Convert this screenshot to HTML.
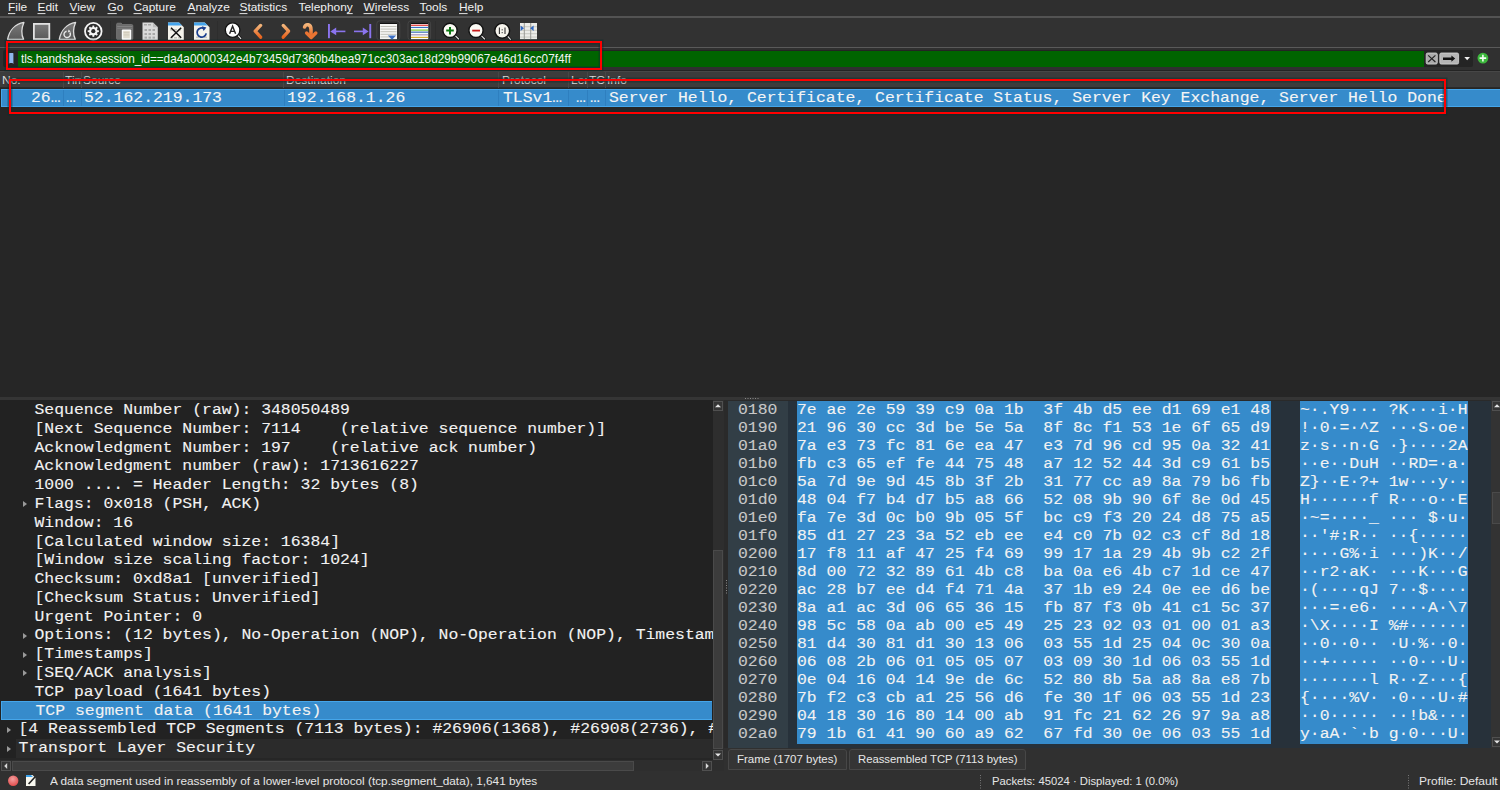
<!DOCTYPE html>
<html><head><meta charset="utf-8">
<style>
html,body{margin:0;padding:0;width:1500px;height:790px;overflow:hidden;background:#2f2f2f;}
body{position:relative;font-family:"Liberation Sans",sans-serif;}
.abs{position:absolute;}
/* menu */
#menubar{position:absolute;left:0;top:0;width:1500px;height:16px;background:#2f2f2f;}
.mi{transform:scaleY(0.92);transform-origin:0 2.5px;position:absolute;top:1px;font-size:11.9px;color:#f0f0f0;line-height:14px;}
.mi u{text-decoration:underline;text-decoration-thickness:1px;text-underline-offset:2px;}
#msep{position:absolute;left:0;top:16px;width:1500px;height:2px;background:#535353;}
#toolbar{position:absolute;left:0;top:18px;width:1500px;height:29px;background:#323232;}
#tsep2{position:absolute;left:0;top:47px;width:1500px;height:1px;background:#5a5a5a;}
#filterbar{position:absolute;left:0;top:48px;width:1500px;height:22px;background:#303030;}
#fframe{position:absolute;left:3px;top:50px;width:1470px;height:17px;background:#242424;border-radius:2px;}
#fgreen{position:absolute;left:18px;top:51px;width:1406px;height:16px;background:#006400;}
#ftext{transform:scaleY(1.04);transform-origin:0 3px;position:absolute;left:21px;top:50.6px;font-size:11.78px;line-height:15px;color:#f4f4f4;white-space:pre;}
/* packet list */
#plhead{position:absolute;left:0;top:71px;width:1500px;height:17px;background:#3c3c3c;box-shadow:inset 0 1px 0 #474747, inset 0 -1px 0 #2a2a2a;}
#plline{position:absolute;left:0;top:70px;width:1500px;height:1px;background:#242424;}
.ph{transform:scaleY(0.9);transform-origin:0 3.4px;position:absolute;top:1.5px;height:15.5px;font-size:12px;line-height:16px;color:#d8d8d8;white-space:nowrap;overflow:hidden;}
.phs{position:absolute;top:0;width:1px;height:17px;background:#474747;}
#plbody{position:absolute;left:0;top:88px;width:1500px;height:309px;background:#262626;}
#selrow{position:absolute;left:1px;top:88.5px;width:1499px;height:18.5px;background:#368bcb;box-shadow:inset 1px 1px 0 #45a6ea, inset 0 -1px 0 #45a6ea;}
.rsep{position:absolute;top:89.5px;width:1px;height:16.5px;background:#2e7fbf;}
.pc{position:absolute;top:90px;transform:scaleY(0.93);transform-origin:0 3px;height:18px;font-family:"Liberation Mono",monospace;font-size:16.43px;-webkit-text-stroke:0.12px currentColor;line-height:18px;color:#f4f4f4;white-space:pre;}
#split1{position:absolute;left:0;top:397px;width:1500px;height:3px;background:#353535;}
/* tree */
#tree{position:absolute;left:0;top:400px;width:713px;height:358px;background:#222222;overflow:hidden;}
.trow{position:absolute;left:0;width:713px;height:19px;}
.trow.sel{background:#368bcb;left:1px;width:711px;box-shadow:inset 1px 1px 0 #45a6ea, inset 0 -1px 0 #45a6ea;}
.trow.hov .hbg{position:absolute;left:16px;top:0;width:697px;height:19px;background:#2b2b2b;}
.tt{position:absolute;top:0.6px;transform:scaleY(0.93);transform-origin:0 3px;font-family:"Liberation Mono",monospace;font-size:16.43px;-webkit-text-stroke:0.12px currentColor;line-height:19px;color:#f2f2f2;white-space:pre;}
.arr{position:absolute;top:7px;width:0;height:0;border-left:4px solid #9a9a9a;border-top:3px solid transparent;border-bottom:3px solid transparent;}
#vscroll{position:absolute;left:713px;top:400px;width:11px;height:361px;background:#2e2e2e;}
#hscroll{position:absolute;left:0;top:760px;width:713px;height:11px;background:#2e2e2e;}
/* hex */
#hexpane{position:absolute;left:724px;top:400px;width:776px;height:348px;background:#2a2a2a;}
#tabarea{position:absolute;left:724px;top:748px;width:776px;height:23px;background:#303030;}
#hexbg{position:absolute;left:728px;top:401px;width:763px;height:347px;background:#27313a;}
.hrow{position:absolute;left:0;width:1500px;height:19px;}
.off{transform:scaleY(0.93);transform-origin:0 3px;position:absolute;left:738px;top:0;font-family:"Liberation Mono",monospace;font-size:16.43px;-webkit-text-stroke:0.12px currentColor;line-height:19px;color:#c8c8c8;white-space:pre;}
.hx{transform:scaleY(0.93);transform-origin:0 3px;position:absolute;left:797px;top:0;font-family:"Liberation Mono",monospace;font-size:16.43px;-webkit-text-stroke:0.12px currentColor;line-height:19px;color:#f2f2f2;white-space:pre;}
.as{transform:scaleY(0.93);transform-origin:0 3px;position:absolute;left:1300px;top:0;font-family:"Liberation Mono",monospace;font-size:16.43px;-webkit-text-stroke:0.12px currentColor;line-height:19px;color:#f2f2f2;white-space:pre;}
#hexsel{position:absolute;left:796.7px;top:401px;width:474.3px;height:342.7px;background:#368bcb;}
#ascsel{position:absolute;left:1299.7px;top:401px;width:168.3px;height:342.7px;background:#368bcb;}
.tab{position:absolute;top:749px;height:21px;border:1px solid #474747;border-radius:3px 3px 0 0;background:#353535;box-sizing:border-box;}
.tabt{position:absolute;left:8px;top:2.5px;font-size:11.3px;line-height:15px;color:#e8e8e8;white-space:nowrap;transform-origin:0 2.5px;}
/* status */
#status{position:absolute;left:0;top:771px;width:1500px;height:19px;background:#303030;}
.st{position:absolute;top:774.6px;font-size:12px;line-height:15px;color:#e6e6e6;white-space:pre;transform-origin:0 2.5px;}
.redbox{position:absolute;border:2px solid #ff0000;box-sizing:border-box;box-shadow:0 0 0 1.5px rgba(10,45,45,0.45), inset 0 0 0 1.5px rgba(10,45,45,0.45);}
</style></head><body>
<div id="menubar">
<span class="mi" style="left:8px"><u>F</u>ile</span>
<span class="mi" style="left:37.5px"><u>E</u>dit</span>
<span class="mi" style="left:69.5px"><u>V</u>iew</span>
<span class="mi" style="left:107.5px"><u>G</u>o</span>
<span class="mi" style="left:133.5px"><u>C</u>apture</span>
<span class="mi" style="left:187.5px"><u>A</u>nalyze</span>
<span class="mi" style="left:239.5px"><u>S</u>tatistics</span>
<span class="mi" style="left:298.5px">Telephon<u>y</u></span>
<span class="mi" style="left:363.5px"><u>W</u>ireless</span>
<span class="mi" style="left:419.5px"><u>T</u>ools</span>
<span class="mi" style="left:459px"><u>H</u>elp</span>
</div>
<div id="msep"></div>
<div id="toolbar">
<svg style="position:absolute;left:0;top:-18px" width="560" height="48" viewBox="0 0 560 48">
<defs>
<linearGradient id="gfin" x1="0" y1="0" x2="0" y2="1"><stop offset="0" stop-color="#7a7a7a"/><stop offset="1" stop-color="#5a5a5a"/></linearGradient>
<linearGradient id="gor" x1="0" y1="0" x2="0" y2="1"><stop offset="0" stop-color="#f2b47a"/><stop offset="1" stop-color="#e8641e"/></linearGradient>
</defs>
<!-- separators -->
<rect x="110" y="21" width="1" height="20" fill="#2d2d2d"/>
<rect x="217" y="21" width="1" height="20" fill="#2d2d2d"/>
<rect x="435" y="21" width="1" height="20" fill="#2d2d2d"/>
<!-- 1 shark fin -->
<path d="M7.6,39.4 C9.2,30.5 15.2,24 23.9,22.4 C21.2,28.5 21,34 23.6,39.4 Z" fill="url(#gfin)" stroke="#dedede" stroke-width="1.3" stroke-linejoin="round"/>
<!-- 2 stop -->
<rect x="33.9" y="23.9" width="15.4" height="15.2" fill="url(#gfin)" stroke="#e2e2e2" stroke-width="1.8"/>
<!-- 3 restart fin -->
<path d="M59.3,39.4 C60.9,30.5 66.9,24 75.6,22.4 C72.9,28.5 72.7,34 75.3,39.4 Z" fill="url(#gfin)" stroke="#dedede" stroke-width="1.3" stroke-linejoin="round"/>
<path d="M66.6,31.2 A3.2,3.2 0 1 0 69.8,32.5" fill="none" stroke="#e8e8e8" stroke-width="1.4"/>
<path d="M68.6,29.6 L70.6,31.6 L67.8,32.6 Z" fill="#e8e8e8"/>
<!-- 4 gear -->
<circle cx="93.3" cy="31.2" r="8.3" fill="#2b2b2b" stroke="#f4f4f4" stroke-width="1.8"/>
<g transform="translate(93.3,31.2)" fill="#f4f4f4">
<circle r="4.3"/>
<rect x="-0.9" y="-5.6" width="1.8" height="11.2"/>
<rect x="-0.9" y="-5.6" width="1.8" height="11.2" transform="rotate(45)"/>
<rect x="-0.9" y="-5.6" width="1.8" height="11.2" transform="rotate(90)"/>
<rect x="-0.9" y="-5.6" width="1.8" height="11.2" transform="rotate(135)"/>
<circle r="2.1" fill="#2b2b2b"/>
</g>
<!-- 5 folder -->
<path d="M116.6,38.4 V24.4 Q116.6,23.2 117.8,23.2 H121.2 L122.6,24.6 H131.6 Q132.8,24.6 132.8,25.8 V38.4 Q132.8,39.6 131.6,39.6 H117.8 Q116.6,39.6 116.6,38.4 Z" fill="#6a6a6a" stroke="#7c7c7c" stroke-width="0.8"/>
<rect x="117.2" y="26.2" width="15" height="0.9" fill="#888"/>
<rect x="117.2" y="28" width="15" height="0.8" fill="#7e7e7e"/>
<rect x="121.8" y="29.4" width="9.4" height="10.5" rx="1" fill="#fbfbfb"/>
<rect x="123.2" y="30.9" width="6.6" height="7.4" fill="#e0dccf"/>
<rect x="123.6" y="32.4" width="5.8" height="0.7" fill="#c8c2b2"/>
<rect x="123.6" y="34.6" width="5.8" height="0.7" fill="#c8c2b2"/>
<!-- 6 file -->
<path d="M142.5,22.5 h10.5 l4.8,4.8 v12.8 h-15.3 Z" fill="#dadada"/>
<path d="M153,22.5 v4.8 h4.8" fill="#bdbdbd"/>
<g fill="#a8a8a8"><rect x="144.5" y="29" width="2.5" height="2"/><rect x="148.5" y="29" width="2.5" height="2"/><rect x="152.5" y="29" width="2.5" height="2"/>
<rect x="144.5" y="33" width="2.5" height="2"/><rect x="148.5" y="33" width="2.5" height="2"/><rect x="152.5" y="33" width="2.5" height="2"/>
<rect x="144.5" y="36.6" width="2.5" height="2"/><rect x="148.5" y="36.6" width="2.5" height="2"/><rect x="152.5" y="36.6" width="2.5" height="2"/>
<rect x="144" y="24" width="3" height="1.5"/><rect x="148" y="24" width="3" height="1.5"/></g>
<!-- 7 close file -->
<path d="M168,22.5 h11 l4.8,4.8 v12.8 h-15.8 Z" fill="#f4f3ec"/>
<path d="M168,22.5 h11 l3,3 h-14 Z" fill="#44a4ec"/>
<g fill="#c9c9c0"><rect x="170" y="29" width="3" height="1.6"/><rect x="174" y="29" width="3" height="1.6"/><rect x="178" y="29" width="3" height="1.6"/><rect x="170" y="37" width="3" height="1.6"/><rect x="174" y="37" width="3" height="1.6"/><rect x="178" y="37" width="3" height="1.6"/></g>
<path d="M171,27.8 L181.2,37.8 M181.2,27.8 L171,37.8" stroke="#111" stroke-width="1.5"/>
<!-- 8 reload file -->
<path d="M194,22.5 h10.7 l4.8,4.8 v12.8 h-15.5 Z" fill="#f4f3ec"/>
<path d="M194,22.5 h10.7 l3,3 h-13.7 Z" fill="#44a4ec"/>
<g fill="#c9c9c0"><rect x="196" y="36.5" width="3" height="1.6"/><rect x="200" y="36.5" width="3" height="1.6"/><rect x="204" y="36.5" width="3" height="1.6"/></g>
<path d="M204.2,28.6 A4.6,4.6 0 1 0 206.2,33.4" fill="none" stroke="#1a3f8f" stroke-width="1.8"/>
<path d="M201.8,26.2 L206.4,27.6 L203.6,31 Z" fill="#1a3f8f"/>
<!-- 9 find -->
<path d="M237.6,35 L240.8,38.6" stroke="#111" stroke-width="2.6" stroke-linecap="round"/>
<path d="M237.6,35 L240.8,38.6" stroke="#e6e6e6" stroke-width="1.2" stroke-linecap="round"/>
<circle cx="232.6" cy="30.1" r="7.3" fill="#fcfcfc" stroke="#111" stroke-width="1.3"/>
<path d="M229.6,33.8 L232.6,26.2 L235.6,33.8 M230.6,31.4 H234.6" fill="none" stroke="#222" stroke-width="1.4"/>
<!-- 10 prev / 11 next -->
<polyline points="260.6,25.4 255.2,31.2 260.6,37.2" fill="none" stroke="url(#gor)" stroke-width="3.3" stroke-linecap="round" stroke-linejoin="round"/>
<polyline points="283.2,25.4 288.6,31.2 283.2,37.2" fill="none" stroke="url(#gor)" stroke-width="3.3" stroke-linecap="round" stroke-linejoin="round"/>
<!-- 12 go to -->
<path d="M304.6,27 C305.8,23.6 311,23.8 311,29.5 L311,36" fill="none" stroke="url(#gor)" stroke-width="3.6" stroke-linecap="round"/>
<polyline points="306.6,33 311.2,37.6 315.8,33" fill="none" stroke="#ea7432" stroke-width="3.4" stroke-linecap="round" stroke-linejoin="round"/>
<!-- 13 first / 14 last -->
<g fill="#8a74ee" stroke="none">
<rect x="328" y="24" width="1.9" height="14.2"/>
<rect x="334" y="30.6" width="11.4" height="1.6"/>
<path d="M330.3,31.4 L336.2,27.6 L336.2,35.2 Z"/>
<rect x="369.3" y="24" width="1.9" height="14.2"/>
<rect x="354" y="30.6" width="11.4" height="1.6"/>
<path d="M368.6,31.4 L362.8,27.6 L362.8,35.2 Z"/>
</g>
<!-- 15 autoscroll -->
<rect x="376.8" y="20.8" width="23" height="19.4" rx="3" fill="#303030" stroke="#454545" stroke-width="1"/>
<rect x="380" y="23" width="17" height="16.2" fill="#f6f6f4"/>
<rect x="380" y="23" width="17" height="1" fill="#111"/>
<g fill="#c0c0b8"><rect x="380.5" y="26" width="16" height="1"/><rect x="380.5" y="28.6" width="16" height="1"/><rect x="380.5" y="31.2" width="16" height="1"/><rect x="380.5" y="33.8" width="16" height="1"/><rect x="380.5" y="36.4" width="9" height="1"/></g>
<path d="M387.8,35.4 L396.2,35.4 L392,39.8 Z" fill="#3b6fc4"/>
<!-- 16 colorize -->
<rect x="408" y="20.8" width="22.6" height="19.4" rx="3" fill="#303030" stroke="#454545" stroke-width="1"/>
<rect x="411" y="23" width="17.2" height="16.2" fill="#fbfbfb"/>
<rect x="411" y="23" width="17.2" height="1" fill="#111"/>
<rect x="411" y="24.7" width="17.2" height="1.1" fill="#e02424"/>
<rect x="411" y="26.9" width="17.2" height="1.1" fill="#3b6fc4"/>
<rect x="411" y="29.5" width="17.2" height="1.2" fill="#7ccd2e"/>
<rect x="411" y="31.6" width="17.2" height="1.1" fill="#2a64b0"/>
<rect x="411" y="34.2" width="17.2" height="1.2" fill="#a797c0"/>
<rect x="411" y="36.8" width="17.2" height="1.2" fill="#d8b030"/>
<!-- 17 zoom in -->
<path d="M455,35.4 L458.6,39" stroke="#111" stroke-width="2.6" stroke-linecap="round"/>
<path d="M455,35.4 L458.6,39" stroke="#dedede" stroke-width="1.2" stroke-linecap="round"/>
<circle cx="450" cy="30.4" r="7.1" fill="#fbfaf4" stroke="#111" stroke-width="1.4"/>
<path d="M446.2,30.6 H453.8 M450,26.9 V34.4" stroke="#0b7a12" stroke-width="2"/>
<!-- 18 zoom out -->
<path d="M481,35.4 L484.6,39" stroke="#111" stroke-width="2.6" stroke-linecap="round"/>
<path d="M481,35.4 L484.6,39" stroke="#dedede" stroke-width="1.2" stroke-linecap="round"/>
<circle cx="476" cy="30.4" r="7.1" fill="#fbfaf4" stroke="#111" stroke-width="1.4"/>
<path d="M472.2,30.6 H480" stroke="#c81a1a" stroke-width="1.8"/>
<!-- 19 normal size -->
<path d="M507.4,36 L510.6,39.6" stroke="#111" stroke-width="2.6" stroke-linecap="round"/>
<path d="M507.4,36 L510.6,39.6" stroke="#dedede" stroke-width="1.2" stroke-linecap="round"/>
<circle cx="502.2" cy="30.8" r="7.4" fill="#f6f4ec" stroke="#111" stroke-width="1.4"/>
<path d="M499.4,27.6 V34 M505,27.6 V34" stroke="#333" stroke-width="1.1"/>
<rect x="501.6" y="29.2" width="1.2" height="1.2" fill="#555"/><rect x="501.6" y="32" width="1.2" height="1.2" fill="#555"/>
<!-- 20 resize columns -->
<rect x="520" y="23" width="17" height="16.2" fill="#ecece8"/>
<g fill="#c4c4bc"><rect x="520" y="26.3" width="17" height="0.9"/><rect x="520" y="29.8" width="17" height="0.9"/><rect x="520" y="33.3" width="17" height="0.9"/><rect x="520" y="36.6" width="17" height="0.9"/></g>
<rect x="523.8" y="23" width="1" height="16.2" fill="#9a9a94"/>
<rect x="530.2" y="23" width="1" height="16.2" fill="#9a9a94"/>
<path d="M520.6,25.6 L524,28.3 L520.6,31 Z" fill="#2e66c0"/>
<path d="M533.6,25.6 L530.2,28.3 L533.6,31 Z" fill="#2e66c0"/>
</svg>

</div>
<div id="tsep2"></div>
<div id="filterbar"></div>
<div id="fframe"></div>
<div class="abs" style="left:9px;top:53px;width:4px;height:10px;background:#8fb4e8;"></div>
<div id="fgreen"></div>
<div id="ftext"><span style="letter-spacing:-0.1px">tls.handshake.session_id==</span><span style="letter-spacing:0.03px">da4a0000342e4b73459d7360b4bea971cc303ac18d29b99067e46d16cc07f4ff</span></div>
<svg style="position:absolute;left:0;top:0" width="1500" height="72" viewBox="0 0 1500 72">
<path d="M8.8,53.2 H13.4 V64 L11.1,61.8 L8.8,64 Z" fill="#8fb6ec"/>
<rect x="1426.2" y="53" width="11.1" height="11.1" rx="1.5" fill="#ababab" stroke="#d4d4d4" stroke-width="0.8"/>
<path d="M1428.2,55.4 L1435.4,62 M1435.4,55.4 L1428.2,62" stroke="#222" stroke-width="1.1"/>
<rect x="1439.8" y="53" width="18.8" height="11.1" rx="1.5" fill="#b4b4b4" stroke="#d8d8d8" stroke-width="0.8"/>
<path d="M1443,57.4 H1451.4 V55.6 L1455.2,58.6 L1451.4,61.8 V60 H1443 Z" fill="#111"/>
<path d="M1464.3,57 L1470,57 L1467.15,60.2 Z" fill="#f0f0f0"/>
<circle cx="1482.9" cy="58.1" r="5.4" fill="#3db83d"/>
<path d="M1479.6,58.1 H1486.2 M1482.9,54.8 V61.4" stroke="#f4fff4" stroke-width="1.6"/>
</svg>

<div id="plline"></div>
<div id="plhead">
<span class="ph" style="left:2px;width:60px">No.</span><div class="phs" style="left:63px"></div>
<span class="ph" style="left:65px;width:16px">Time</span><div class="phs" style="left:81px"></div>
<span class="ph" style="left:83px;width:200px">Source</span><div class="phs" style="left:283px"></div>
<span class="ph" style="left:286px;width:210px">Destination</span><div class="phs" style="left:498px"></div>
<span class="ph" style="left:502px;width:66px">Protocol</span><div class="phs" style="left:568px"></div>
<span class="ph" style="left:571px;width:16px">Length</span><div class="phs" style="left:587px"></div>
<span class="ph" style="left:589px;width:16px">TCP</span><div class="phs" style="left:605px"></div>
<span class="ph" style="left:607px;width:200px">Info</span>
</div>
<div id="plbody"></div>
<div id="selrow"></div><div class="rsep" style="left:63px"></div><div class="rsep" style="left:81px"></div><div class="rsep" style="left:284px"></div><div class="rsep" style="left:498px"></div><div class="rsep" style="left:568px"></div><div class="rsep" style="left:587px"></div><div class="rsep" style="left:605px"></div>
<span class="pc" style="left:31px">26…</span>
<span class="pc" style="left:66px">…</span>
<span class="pc" style="left:84px">52.162.219.173</span>
<span class="pc" style="left:287px">192.168.1.26</span>
<span class="pc" style="left:503px">TLSv1…</span>
<span class="pc" style="left:576px">…</span>
<span class="pc" style="left:590px">…</span>
<span class="pc" style="left:609px">Server Hello, Certificate, Certificate Status, Server Key Exchange, Server Hello Done</span>
<div id="split1"></div>
<div id="tree">
<div class="trow" style="top:0.50px"><span class="tt" style="left:34.5px">Sequence Number (raw): 348050489</span></div>
<div class="trow" style="top:19.28px"><span class="tt" style="left:34.5px">[Next Sequence Number: 7114    (relative sequence number)]</span></div>
<div class="trow" style="top:38.06px"><span class="tt" style="left:34.5px">Acknowledgment Number: 197    (relative ack number)</span></div>
<div class="trow" style="top:56.84px"><span class="tt" style="left:34.5px">Acknowledgment number (raw): 1713616227</span></div>
<div class="trow" style="top:75.62px"><span class="tt" style="left:34.5px">1000 .... = Header Length: 32 bytes (8)</span></div>
<div class="trow" style="top:94.40px"><span class="arr" style="left:23px"></span><span class="tt" style="left:34.5px">Flags: 0x018 (PSH, ACK)</span></div>
<div class="trow" style="top:113.18px"><span class="tt" style="left:34.5px">Window: 16</span></div>
<div class="trow" style="top:131.96px"><span class="tt" style="left:34.5px">[Calculated window size: 16384]</span></div>
<div class="trow" style="top:150.74px"><span class="tt" style="left:34.5px">[Window size scaling factor: 1024]</span></div>
<div class="trow" style="top:169.52px"><span class="tt" style="left:34.5px">Checksum: 0xd8a1 [unverified]</span></div>
<div class="trow" style="top:188.30px"><span class="tt" style="left:34.5px">[Checksum Status: Unverified]</span></div>
<div class="trow" style="top:207.08px"><span class="tt" style="left:34.5px">Urgent Pointer: 0</span></div>
<div class="trow" style="top:225.86px"><span class="arr" style="left:23px"></span><span class="tt" style="left:34.5px">Options: (12 bytes), No-Operation (NOP), No-Operation (NOP), Timestamps</span></div>
<div class="trow" style="top:244.64px"><span class="arr" style="left:23px"></span><span class="tt" style="left:34.5px">[Timestamps]</span></div>
<div class="trow" style="top:263.42px"><span class="arr" style="left:23px"></span><span class="tt" style="left:34.5px">[SEQ/ACK analysis]</span></div>
<div class="trow" style="top:282.20px"><span class="tt" style="left:34.5px">TCP payload (1641 bytes)</span></div>
<div class="trow sel" style="top:300.98px"><span class="tt" style="left:34.5px">TCP segment data (1641 bytes)</span></div>
<div class="trow" style="top:319.76px"><span class="arr" style="left:7px"></span><span class="tt" style="left:18.5px">[4 Reassembled TCP Segments (7113 bytes): #26906(1368), #26908(2736), #26910(4104)]</span></div>
<div class="trow hov" style="top:338.54px"><div class="hbg"></div><span class="arr" style="left:7px"></span><span class="tt" style="left:18.5px">Transport Layer Security</span></div>
</div>
<div id="vscroll"></div>
<div class="abs" style="left:713px;top:401px;width:10px;height:10px;border:1px solid #505050;box-sizing:border-box;background:#353535;"></div>
<svg class="abs" style="left:713px;top:401px" width="10" height="10"><path d="M2,6.2 L5,3.2 L8,6.2 Z" fill="#e6e6e6"/></svg>
<div class="abs" style="left:713px;top:550px;width:10px;height:199px;border:1px solid #4a4a4a;box-sizing:border-box;background:#3c3c3c;"></div>
<div class="abs" style="left:713px;top:750px;width:10px;height:10px;border:1px solid #505050;box-sizing:border-box;background:#353535;"></div>
<svg class="abs" style="left:713px;top:750px" width="10" height="10"><path d="M2,3.6 L8,3.6 L5,6.6 Z" fill="#e6e6e6"/></svg>
<div class="abs" style="left:0;top:758px;width:713px;height:3px;background:#262626;"></div>
<div id="hscroll"></div>
<div class="abs" style="left:1px;top:761px;width:10px;height:10px;border:1px solid #505050;box-sizing:border-box;background:#353535;"></div>
<svg class="abs" style="left:1px;top:761px" width="10" height="10"><path d="M6.2,2 L3.2,5 L6.2,8 Z" fill="#d8d8d8"/></svg>
<div class="abs" style="left:12px;top:761px;width:622px;height:10px;border:1px solid #4a4a4a;box-sizing:border-box;background:#3c3c3c;"></div>
<div class="abs" style="left:702px;top:761px;width:10px;height:10px;border:1px solid #505050;box-sizing:border-box;background:#353535;"></div>
<svg class="abs" style="left:702px;top:761px" width="10" height="10"><path d="M3.8,2 L6.8,5 L3.8,8 Z" fill="#d8d8d8"/></svg>
<div class="abs" style="left:713px;top:760px;width:11px;height:11px;background:#2e2e2e;"></div>
<div id="hexpane"></div><div id="tabarea"></div>
<div id="hexbg"></div>
<div class="abs" style="left:728px;top:401px;width:60px;height:347px;background:#323e46;"></div>
<div id="hexsel"></div>
<div id="ascsel"></div>
<div class="hrow" style="top:400.50px"><span class="off">0180</span><span class="hx">7e ae 2e 59 39 c9 0a 1b  3f 4b d5 ee d1 69 e1 48</span><span class="as">~·.Y9··· ?K···i·H</span></div>
<div class="hrow" style="top:418.55px"><span class="off">0190</span><span class="hx">21 96 30 cc 3d be 5e 5a  8f 8c f1 53 1e 6f 65 d9</span><span class="as">!·0·=·^Z ···S·oe·</span></div>
<div class="hrow" style="top:436.60px"><span class="off">01a0</span><span class="hx">7a e3 73 fc 81 6e ea 47  e3 7d 96 cd 95 0a 32 41</span><span class="as">z·s··n·G ·}····2A</span></div>
<div class="hrow" style="top:454.65px"><span class="off">01b0</span><span class="hx">fb c3 65 ef fe 44 75 48  a7 12 52 44 3d c9 61 b5</span><span class="as">··e··DuH ··RD=·a·</span></div>
<div class="hrow" style="top:472.70px"><span class="off">01c0</span><span class="hx">5a 7d 9e 9d 45 8b 3f 2b  31 77 cc a9 8a 79 b6 fb</span><span class="as">Z}··E·?+ 1w···y··</span></div>
<div class="hrow" style="top:490.75px"><span class="off">01d0</span><span class="hx">48 04 f7 b4 d7 b5 a8 66  52 08 9b 90 6f 8e 0d 45</span><span class="as">H······f R···o··E</span></div>
<div class="hrow" style="top:508.80px"><span class="off">01e0</span><span class="hx">fa 7e 3d 0c b0 9b 05 5f  bc c9 f3 20 24 d8 75 a5</span><span class="as">·~=····_ ··· $·u·</span></div>
<div class="hrow" style="top:526.85px"><span class="off">01f0</span><span class="hx">85 d1 27 23 3a 52 eb ee  e4 c0 7b 02 c3 cf 8d 18</span><span class="as">··'#:R·· ··{·····</span></div>
<div class="hrow" style="top:544.90px"><span class="off">0200</span><span class="hx">17 f8 11 af 47 25 f4 69  99 17 1a 29 4b 9b c2 2f</span><span class="as">····G%·i ···)K··/</span></div>
<div class="hrow" style="top:562.95px"><span class="off">0210</span><span class="hx">8d 00 72 32 89 61 4b c8  ba 0a e6 4b c7 1d ce 47</span><span class="as">··r2·aK· ···K···G</span></div>
<div class="hrow" style="top:581.00px"><span class="off">0220</span><span class="hx">ac 28 b7 ee d4 f4 71 4a  37 1b e9 24 0e ee d6 be</span><span class="as">·(····qJ 7··$····</span></div>
<div class="hrow" style="top:599.05px"><span class="off">0230</span><span class="hx">8a a1 ac 3d 06 65 36 15  fb 87 f3 0b 41 c1 5c 37</span><span class="as">···=·e6· ····A·\7</span></div>
<div class="hrow" style="top:617.10px"><span class="off">0240</span><span class="hx">98 5c 58 0a ab 00 e5 49  25 23 02 03 01 00 01 a3</span><span class="as">·\X····I %#······</span></div>
<div class="hrow" style="top:635.15px"><span class="off">0250</span><span class="hx">81 d4 30 81 d1 30 13 06  03 55 1d 25 04 0c 30 0a</span><span class="as">··0··0·· ·U·%··0·</span></div>
<div class="hrow" style="top:653.20px"><span class="off">0260</span><span class="hx">06 08 2b 06 01 05 05 07  03 09 30 1d 06 03 55 1d</span><span class="as">··+····· ··0···U·</span></div>
<div class="hrow" style="top:671.25px"><span class="off">0270</span><span class="hx">0e 04 16 04 14 9e de 6c  52 80 8b 5a a8 8a e8 7b</span><span class="as">·······l R··Z···{</span></div>
<div class="hrow" style="top:689.30px"><span class="off">0280</span><span class="hx">7b f2 c3 cb a1 25 56 d6  fe 30 1f 06 03 55 1d 23</span><span class="as">{····%V· ·0···U·#</span></div>
<div class="hrow" style="top:707.35px"><span class="off">0290</span><span class="hx">04 18 30 16 80 14 00 ab  91 fc 21 62 26 97 9a a8</span><span class="as">··0····· ··!b&amp;···</span></div>
<div class="hrow" style="top:725.40px"><span class="off">02a0</span><span class="hx">79 1b 61 41 90 60 a9 62  67 fd 30 0e 06 03 55 1d</span><span class="as">y·aA·`·b g·0···U·</span></div>
<div class="abs" style="left:1491px;top:400px;width:9px;height:348px;background:#333333;"></div>
<div class="abs" style="left:1492px;top:401px;width:8px;height:10px;border:1px solid #505050;border-right:none;box-sizing:border-box;background:#353535;"></div>
<svg class="abs" style="left:1492px;top:401px" width="8" height="10"><path d="M2,6.2 L5,3.2 L8,6.2 Z" fill="#e6e6e6"/></svg>
<div class="abs" style="left:1492px;top:492px;width:8px;height:32px;border:1px solid #4a4a4a;border-right:none;box-sizing:border-box;background:#3c3c3c;"></div>
<div class="abs" style="left:1492px;top:737px;width:8px;height:10px;border:1px solid #505050;border-right:none;box-sizing:border-box;background:#353535;"></div>
<svg class="abs" style="left:1492px;top:737px" width="8" height="10"><path d="M2,3.6 L8,3.6 L5,6.6 Z" fill="#e6e6e6"/></svg>
<svg class="abs" style="left:745px;top:397px" width="16" height="3"><g fill="#8a8a8a"><rect x="0" y="1" width="1" height="1"/><rect x="2.5" y="1" width="1" height="1"/><rect x="5" y="1" width="1" height="1"/><rect x="7.5" y="1" width="1" height="1"/><rect x="10" y="1" width="1" height="1"/><rect x="12.5" y="1" width="1" height="1"/></g></svg>
<svg class="abs" style="left:725px;top:580px" width="3" height="16"><g fill="#8a8a8a"><rect x="1" y="0" width="1" height="1"/><rect x="1" y="2.5" width="1" height="1"/><rect x="1" y="5" width="1" height="1"/><rect x="1" y="7.5" width="1" height="1"/><rect x="1" y="10" width="1" height="1"/><rect x="1" y="12.5" width="1" height="1"/></g></svg>
<div class="tab" style="left:728px;width:119px"><span class="tabt" style="transform:scale(1.018,0.9)">Frame (1707 bytes)</span></div>
<div class="tab" style="left:849px;width:177px"><span class="tabt" style="transform:scaleY(0.9)">Reassembled TCP (7113 bytes)</span></div>
<div id="status"></div>
<svg class="abs" style="left:0;top:771px" width="60" height="19">
<defs><radialGradient id="grd" cx="0.45" cy="0.35" r="0.7"><stop offset="0" stop-color="#f4a0a0"/><stop offset="1" stop-color="#e04848"/></radialGradient></defs>
<circle cx="13.2" cy="9.7" r="5.2" fill="url(#grd)"/>
<path d="M26,4 h6.5 l3,3 v8 h-9.5 Z" fill="#f8f8f0"/>
<path d="M26,4 h5 l2,2 h-7 Z" fill="#3aa0ea"/>
<path d="M28.6,13 L35,6" stroke="#222" stroke-width="1.6"/>
</svg>
<span class="st" style="left:50px;transform:scale(0.983,0.9)">A data segment used in reassembly of a lower-level protocol (tcp.segment_data), 1,641 bytes</span>
<svg class="abs" style="left:979px;top:775px" width="3" height="14"><g fill="#777"><rect x="1" y="0" width="1" height="1"/><rect x="1" y="2.5" width="1" height="1"/><rect x="1" y="5" width="1" height="1"/><rect x="1" y="7.5" width="1" height="1"/><rect x="1" y="10" width="1" height="1"/><rect x="1" y="12.5" width="1" height="1"/></g></svg>
<span class="st" style="left:992px;transform:scale(0.94,0.9)">Packets: 45024 · Displayed: 1 (0.0%)</span>
<svg class="abs" style="left:1407px;top:775px" width="3" height="14"><g fill="#777"><rect x="1" y="0" width="1" height="1"/><rect x="1" y="2.5" width="1" height="1"/><rect x="1" y="5" width="1" height="1"/><rect x="1" y="7.5" width="1" height="1"/><rect x="1" y="10" width="1" height="1"/><rect x="1" y="12.5" width="1" height="1"/></g></svg>
<span class="st" style="left:1419px;transform:scaleY(0.9)">Profile: Default</span>
<div class="redbox" style="left:6px;top:41px;width:596px;height:29px"></div>
<div class="redbox" style="left:9px;top:79px;width:1437px;height:35px"></div>
</body></html>
